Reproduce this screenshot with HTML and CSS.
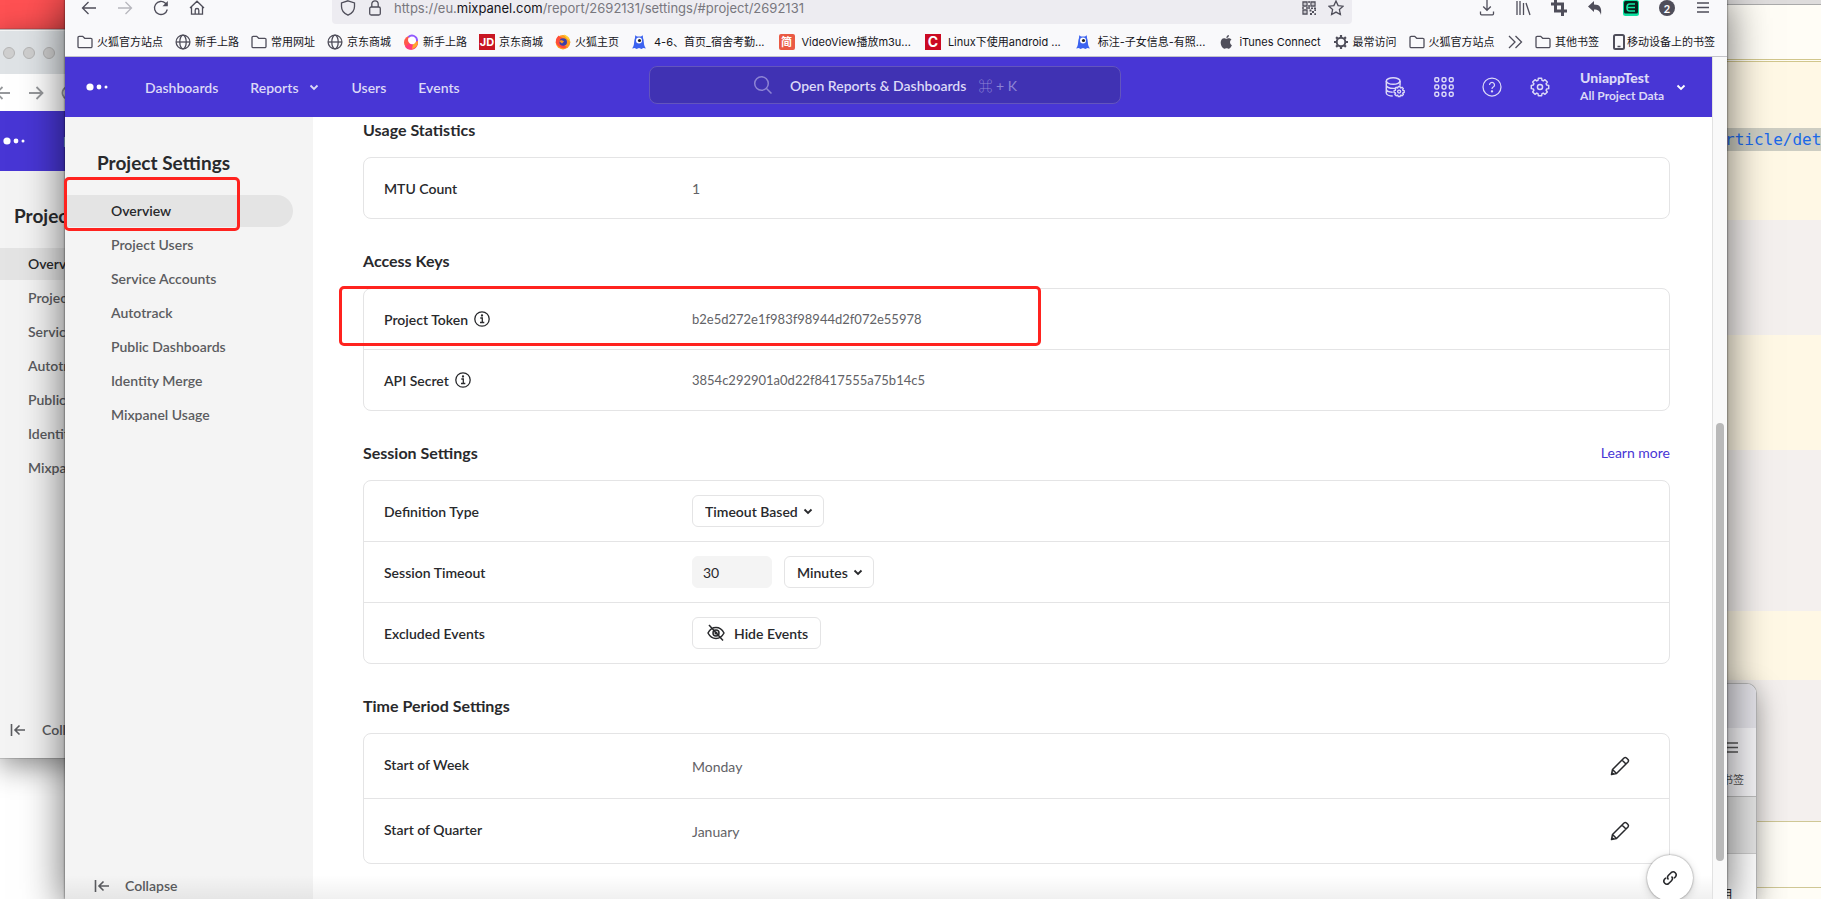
FILE: index.html
```html
<!DOCTYPE html>
<html lang="en">
<head>
<meta charset="utf-8">
<title>Project Settings</title>
<link rel="stylesheet" href="styles.css">
</head>
<body>
<svg class="defs" aria-hidden="true">
  <symbol id="arrow-left" viewBox="0 0 16 16"><path d="M15 8H1.500M7.500 2 1.500 8l6 6"/></symbol>
  <symbol id="arrow-right" viewBox="0 0 16 16"><path d="M1 8h13.500M8.500 2l6 6-6 6"/></symbol>
  <symbol id="reload" viewBox="0 0 16 16"><path d="M14.300 9.500A6.500 6.500 0 1 1 12.500 3.300L14 5"/><path d="M14.800 1v5.300H9.500z" fill="currentColor" stroke="none"/></symbol>
  <symbol id="home" viewBox="0 0 16 16"><path d="M1 8 8 1.200 15 8M2.500 7v7.200h11V7M6.200 14V10.300a1.800 1.800 0 0 1 3.600 0V14"/></symbol>
  <symbol id="folder" viewBox="0 0 16 16"><path d="M1 12.500V3.500a1.200 1.200 0 0 1 1.200-1.200h3.500l2 2h6.100A1.200 1.200 0 0 1 15 5.500v7a1.200 1.200 0 0 1-1.200 1.200H2.200A1.200 1.200 0 0 1 1 12.500z"/></symbol>
  <symbol id="globe" viewBox="0 0 16 16"><circle cx="8" cy="8" r="6.900"/><ellipse cx="8" cy="8" rx="3.200" ry="6.900"/><path d="M1 8h14"/></symbol>
  <symbol id="fox" viewBox="0 0 16 16"><circle cx="8" cy="8.200" r="7.300" fill="#ff9a1f" stroke="none"/><path d="M1 5.500C2 3 3 2.500 3.500 1.500 4.500 3 6 3 8 4L5 9l7 4a7.300 7.300 0 0 1-11-7.500z" fill="#ff4b3a" stroke="none"/><circle cx="8.200" cy="8" r="3.800" fill="#3b3fa8" stroke="none"/><path d="M9 .500c3 1 6 4 6.300 7.500-1-1.500-2-2.500-3-3C11 3 9.500 2.500 9 .500z" fill="#ffd52e" stroke="none"/><path d="M4 7c2-1.500 4-.500 5 .500L7 9.500z" fill="#ff9a1f" stroke="none"/></symbol>
  <symbol id="swirl" viewBox="0 0 16 16"><circle cx="8" cy="8.500" r="7" fill="#ff5a4a" stroke="none"/><path d="M2 12.500A7 7 0 0 0 14.500 11C15 8 14 6 13 5z" fill="#ff3b7c" stroke="none"/><path d="M9 15a7 7 0 0 0 5.800-8L10 10z" fill="#ffa62b" stroke="none"/><circle cx="9.200" cy="6" r="4.200" fill="#fff" stroke="none"/><path d="M5.500 3A5 5 0 0 1 14 7" stroke="#9059ff" stroke-width="1.800"/></symbol>
  <symbol id="monster" viewBox="0 0 16 16"><path d="M4 4 4.200 1.200 6 2.500h4l1.800-1.300L12 4c1 2 .700 6 1.500 8l1.300 2.500-2.500-.500-1.800 1-2.500-1-2.500 1-1.800-1-2.500.500L2.500 12C3.300 10 3 6 4 4z" fill="#3c63f0" stroke="none"/><circle cx="8" cy="6.500" r="3" fill="#fff" stroke="none"/><circle cx="8.500" cy="6.500" r="1.600" fill="#222" stroke="none"/></symbol>
  <symbol id="apple" viewBox="0 0 16 16"><path d="M11 8.200c0-1.700 1.400-2.500 1.500-2.600-.800-1.200-2.100-1.400-2.500-1.400-1.100-.100-2 .600-2.600.600-.500 0-1.400-.600-2.300-.600C3 4.300 1.700 6 1.700 8.600c0 2.800 2 6.200 3.700 6.200.800 0 1.200-.500 2.200-.500 1.100 0 1.400.500 2.200.500 1.500 0 2.800-2.600 3.100-3.700-.100 0-1.900-.800-1.900-2.900zM9.200 3.200c.500-.600.800-1.400.700-2.200-1.500.200-2.700 1.500-2.500 2.900.700 0 1.400-.300 1.800-.700z" fill="currentColor" stroke="none"/></symbol>
  <symbol id="cog" viewBox="0 0 16 16"><circle cx="8" cy="8" r="4.300" stroke-width="2"/><path stroke-width="2.200" d="M8 1v2.500M8 12.500V15M1 8h2.500M12.500 8H15M3.100 3.100l1.700 1.700M11.200 11.200l1.700 1.700M12.900 3.100l-1.700 1.700M4.800 11.200l-1.700 1.700"/></symbol>
  <symbol id="more" viewBox="0 0 16 16"><path d="m2 2 6 6-6 6M8.500 2l6 6-6 6"/></symbol>
  <symbol id="phone" viewBox="0 0 16 16"><rect x="3" y="1" width="10" height="14" rx="1.500" stroke-width="2"/><path d="M6.500 12.500h3" stroke-width="1.500"/></symbol>
  <symbol id="shield" viewBox="0 0 16 16"><path d="M8 .800 14.500 3v3.500c0 4-2.500 7-6.500 8.700C4 13.500 1.500 10.500 1.500 6.500V3z"/></symbol>
  <symbol id="lock" viewBox="0 0 16 16"><rect x="2.700" y="7" width="10.600" height="8" rx="1.500"/><path d="M4.800 7V4a3.200 3.200 0 0 1 6.400 0v3"/></symbol>
  <symbol id="qr" viewBox="0 0 16 16"><path d="M2 2h4v4H2zM10 2h4v4h-4zM2 10h4v4H2z"/><path stroke="none" fill="currentColor" d="M3.500 3.500h1v1h-1zM11.500 3.500h1v1h-1zM3.500 11.500h1v1h-1zM7.300 1h1.500v2H7.300zM7.300 5h1.500v4H7.300zM1 7.300h2v1.500H1zM5 7.300h2v1.500H5zM10 7.500h2V9h-2zM13 7.500h2V9h-2zM8.500 9.500h2v2h-2zM11 11h2v2h-2zM13.300 9.300H15v1.700h-1.700zM9 13h2v2H9zM13.300 13.300H15V15h-1.700z"/></symbol>
  <symbol id="star" viewBox="0 0 16 16"><path d="m8 1 2.100 4.600 5 .600-3.700 3.400 1 5L8 12.100l-4.400 2.500 1-5L.900 6.200l5-.600z"/></symbol>
  <symbol id="download" viewBox="0 0 16 16"><path d="M8 0v10M4.200 6.500 8 10.300l3.800-3.800M1.500 11.500v2.300a1 1 0 0 0 1 1h11a1 1 0 0 0 1-1v-2.300"/></symbol>
  <symbol id="library" viewBox="0 0 16 16"><path d="M2 1v14M5 1v14M8.500 3v12M11 3l4 12"/></symbol>
  <symbol id="crop" viewBox="0 0 16 16"><path stroke-width="3" d="M4.500 0v11H16M0 4h11.500v12"/></symbol>
  <symbol id="undo" viewBox="0 0 16 16"><path d="M1 6.500 7 1v3.500c6 0 8 3 7 10.500-1-4-3-5.500-7-5.500V12z" fill="currentColor" stroke="none"/></symbol>
  <symbol id="evernote" viewBox="0 0 16 16"><rect width="16" height="16" rx="2.500" fill="#0fe0a0" stroke="none"/><rect x="1" y="1" width="14" height="12.500" rx="1.500" fill="#06251d" stroke="none"/><path d="M12 4H6.500Q4 4 4 7.500T6.500 11H12M4 7.500h8" stroke="#12e8a4" stroke-width="1.600"/></symbol>
  <symbol id="menu" viewBox="0 0 16 16"><path d="M2 3h12M2 7.500h12M2 12h12"/></symbol>
  <symbol id="dots" viewBox="0 0 24 8"><g fill="#fff" stroke="none"><circle cx="5" cy="4" r="3.600"/><circle cx="14" cy="4" r="2.400"/><circle cx="21" cy="4" r="1.500"/></g></symbol>
  <symbol id="chevron" viewBox="0 0 12 12"><path d="m2.500 4.500 3.500 3.500 3.500-3.500"/></symbol>
  <symbol id="search" viewBox="0 0 20 20"><circle cx="8.500" cy="8.500" r="6.800"/><path d="m13.500 13.500 5 5"/></symbol>
  <symbol id="gear" viewBox="0 0 24 24"><path stroke-linejoin="round" d="M9.800 4.800 10.200 2.500 13.800 2.500 14.200 4.800 15.540 5.350 17.440 4.010 19.990 6.560 18.650 8.460 19.200 9.800 21.500 10.200 21.500 13.800 19.200 14.200 18.650 15.540 19.990 17.440 17.440 19.990 15.540 18.650 14.200 19.200 13.800 21.500 10.200 21.500 9.800 19.200 8.460 18.650 6.560 19.990 4.010 17.440 5.350 15.540 4.800 14.200 2.500 13.800 2.500 10.200 4.800 9.800 5.350 8.460 4.010 6.560 6.560 4.010 8.460 5.350z"/><circle cx="12" cy="12" r="2.800"/></symbol>
  <symbol id="database" viewBox="0 0 24 24"><ellipse cx="10" cy="5.500" rx="7.500" ry="3.500"/><path d="M2.500 5.500v13c0 2 3.500 3.300 7 3.300M17.500 5.500v5M2.500 10c0 2 3.500 3.500 7.500 3.500 1.200 0 2.300-.100 3.300-.300M2.500 14.300c0 2 3.200 3.400 7 3.400"/><use href="#gear" x="9.500" y="10" width="14" height="14" stroke-width="2.500"/></symbol>
  <symbol id="grid" viewBox="0 0 24 24"><g><rect x="2" y="2" width="4.200" height="4.200" rx="1.200"/><rect x="9.900" y="2" width="4.200" height="4.200" rx="1.200"/><rect x="17.800" y="2" width="4.200" height="4.200" rx="1.200"/><rect x="2" y="9.900" width="4.200" height="4.200" rx="1.200"/><rect x="9.900" y="9.900" width="4.200" height="4.200" rx="1.200"/><rect x="17.800" y="9.900" width="4.200" height="4.200" rx="1.200"/><rect x="2" y="17.800" width="4.200" height="4.200" rx="1.200"/><rect x="9.900" y="17.800" width="4.200" height="4.200" rx="1.200"/><rect x="17.800" y="17.800" width="4.200" height="4.200" rx="1.200"/></g></symbol>
  <symbol id="help" viewBox="0 0 24 24"><circle cx="12" cy="12" r="10.800"/><path d="M9 9.500a3 3 0 1 1 4.500 2.600c-1 .600-1.500 1.100-1.500 2.200"/><circle cx="12" cy="17.200" r=".700" fill="currentColor"/></symbol>
  <symbol id="info" viewBox="0 0 16 16"><circle cx="8" cy="8" r="7.200"/><path d="M6.300 7h2v4.500M6 11.500h4.300"/><circle cx="8" cy="4.500" r=".500" fill="currentColor"/></symbol>
  <symbol id="collapse" viewBox="0 0 16 16"><path d="M1.500 2v12M15 8H5.500M9.500 3.500 5 8l4.500 4.500"/></symbol>
  <symbol id="hide" viewBox="0 0 18 18"><path d="M1 9c2-3.800 4.800-5.500 8-5.500S15 5.200 17 9c-2 3.800-4.800 5.500-8 5.500S3 12.800 1 9z"/><circle cx="9" cy="9" r="3"/><circle cx="9" cy="9" r=".800"/><path d="m2 1 14 15.500"/></symbol>
  <symbol id="pencil" viewBox="0 0 20 20"><path stroke-linejoin="round" d="m1.500 18.500 1-5L14 2a2 2 0 0 1 2.500 0L18 3.500A2 2 0 0 1 18 6L6.500 17.500zM12 4l4 4M2.500 13.500l4 4M1.500 18.500l2-.400-1.600-1.600z"/></symbol>
  <symbol id="link" viewBox="0 0 16 16"><path d="M6.500 9.500a3 3 0 0 1 0-4.200l2.800-2.800a3 3 0 0 1 4.200 4.200L12 8.200M9.500 6.500a3 3 0 0 1 0 4.200l-2.800 2.800a3 3 0 0 1-4.200-4.200L4 7.800"/></symbol>
</svg>

<div class="desktop">
  <div class="editor" aria-hidden="true">
    <div class="ed-bar"></div>
    <div class="ed-white ed-head"></div>
    <div class="ed-yellow ed-first"></div>
    <div class="ed-selected">rticle/deta</div>
    <div class="ed-yellow ed-second"></div>
    <div class="ed-gray ed-third"></div>
    <div class="ed-yellow ed-third"></div>
    <div class="ed-gray ed-fourth"></div>
    <div class="ed-yellow ed-fifth"></div>
    <div class="ed-gray ed-sixth"></div>
    <div class="ed-white ed-line"></div>
    <div class="ed-white ed-line"></div>
  </div>

  <div class="window corner" aria-hidden="true">
    <div class="corner-title"></div>
    <div class="corner-tools"><svg class="ic16"><use href="#menu"/></svg><span>书签</span></div>
    <div class="corner-gray"></div>
    <div class="corner-page">明</div>
  </div>

  <div class="red-strip"></div>
  <div class="window behind" aria-hidden="true">
    <div class="b-title"><i></i><i></i><i></i></div>
    <div class="b-tools"><svg class="ic16"><use href="#arrow-left"/></svg><svg class="ic16"><use href="#arrow-right"/></svg><svg class="ic16"><use href="#reload"/></svg></div>
    <div class="b-head"><svg class="logo"><use href="#dots"/></svg><span>D</span></div>
    <div class="b-side">
      <div class="b-heading">Project</div>
      <div class="b-item b-active">Overv</div>
      <div class="b-item">Project</div>
      <div class="b-item">Service</div>
      <div class="b-item">Autotr</div>
      <div class="b-item">Public</div>
      <div class="b-item">Identit</div>
      <div class="b-item">Mixpan</div>
      <div class="b-collapse"><svg class="ic16"><use href="#collapse"/></svg>Coll</div>
    </div>
  </div>

  <div class="window main">
    <div class="toolbar">
      <div class="tools-left">
        <button aria-label="Back"><svg class="ic16"><use href="#arrow-left"/></svg></button>
        <button aria-label="Forward" class="dim"><svg class="ic16"><use href="#arrow-right"/></svg></button>
        <button aria-label="Reload"><svg class="ic16"><use href="#reload"/></svg></button>
        <button aria-label="Home"><svg class="ic16"><use href="#home"/></svg></button>
      </div>
      <div class="urlbar">
        <svg class="ic16"><use href="#shield"/></svg>
        <svg class="ic16"><use href="#lock"/></svg>
        <div class="url">https://eu.<b>mixpanel.com</b>/report/2692131/settings/#project/2692131</div>
        <svg class="ic16"><use href="#qr"/></svg>
        <svg class="ic16"><use href="#star"/></svg>
      </div>
      <div class="tools-right">
        <button aria-label="Downloads"><svg class="ic16"><use href="#download"/></svg></button>
        <button aria-label="Library"><svg class="ic16"><use href="#library"/></svg></button>
        <button aria-label="Capture"><svg class="ic16"><use href="#crop"/></svg></button>
        <button aria-label="Undo"><svg class="ic16"><use href="#undo"/></svg></button>
        <button aria-label="Clipper"><svg class="ic16"><use href="#evernote"/></svg></button>
        <button class="count">2</button>
        <button aria-label="Menu"><svg class="ic16"><use href="#menu"/></svg></button>
      </div>
    </div>

    <div class="bookmarks">
      <a href="#"><svg class="ic16"><use href="#folder"/></svg>火狐官方站点</a>
      <a href="#"><svg class="ic16"><use href="#globe"/></svg>新手上路</a>
      <a href="#"><svg class="ic16"><use href="#folder"/></svg>常用网址</a>
      <a href="#"><svg class="ic16"><use href="#globe"/></svg>京东商城</a>
      <a href="#"><svg class="ic16"><use href="#swirl"/></svg>新手上路</a>
      <a href="#"><span class="tile jd">JD</span>京东商城</a>
      <a href="#"><svg class="ic16"><use href="#fox"/></svg>火狐主页</a>
      <a href="#" class="page"><svg class="ic16"><use href="#monster"/></svg>4-6、首页_宿舍考勤...</a>
      <a href="#" class="page"><span class="tile jian">简</span>VideoView播放m3u...</a>
      <a href="#" class="page"><span class="tile csdn">C</span>Linux下使用android ...</a>
      <a href="#" class="page"><svg class="ic16"><use href="#monster"/></svg>标注-子女信息-有照...</a>
      <a href="#"><svg class="ic16"><use href="#apple"/></svg>iTunes Connect</a>
      <a href="#"><svg class="ic16"><use href="#cog"/></svg>最常访问</a>
      <a href="#"><svg class="ic16"><use href="#folder"/></svg>火狐官方站点</a>
      <a href="#" aria-label="More bookmarks" class="push"><svg class="ic16"><use href="#more"/></svg></a>
      <a href="#"><svg class="ic16"><use href="#folder"/></svg>其他书签</a>
      <a href="#" class="tight"><svg class="ic16"><use href="#phone"/></svg>移动设备上的书签</a>
    </div>

    <div class="viewport">
      <div class="app">
        <header class="header">
          <nav class="nav">
            <svg class="logo"><use href="#dots"/></svg>
            <a href="#" class="first">Dashboards</a>
            <a href="#" class="reports">Reports <svg class="ic12"><use href="#chevron"/></svg></a>
            <a href="#">Users</a>
            <a href="#">Events</a>
          </nav>
          <button class="search"><svg class="ic20"><use href="#search"/></svg><span>Open Reports &amp; Dashboards</span><kbd>⌘ + K</kbd></button>
          <div class="actions">
            <button aria-label="Data"><svg class="ic22"><use href="#database"/></svg></button>
            <button aria-label="Apps"><svg class="ic22"><use href="#grid"/></svg></button>
            <button aria-label="Help"><svg class="ic20"><use href="#help"/></svg></button>
            <button aria-label="Settings"><svg class="ic22"><use href="#gear"/></svg></button>
            <button class="project"><span><strong>UniappTest</strong><small>All Project Data</small></span><svg class="ic12"><use href="#chevron"/></svg></button>
          </div>
        </header>

        <div class="body">
          <aside class="sidebar">
            <h1>Project Settings</h1>
            <ul>
              <li><a href="#" class="active">Overview</a></li>
              <li><a href="#">Project Users</a></li>
              <li><a href="#">Service Accounts</a></li>
              <li><a href="#">Autotrack</a></li>
              <li><a href="#">Public Dashboards</a></li>
              <li><a href="#">Identity Merge</a></li>
              <li><a href="#">Mixpanel Usage</a></li>
            </ul>
            <button class="collapse"><svg class="ic16"><use href="#collapse"/></svg>Collapse</button>
          </aside>

          <main class="content">
            <section>
              <div class="section-head"><h2>Usage Statistics</h2></div>
              <dl class="card">
                <div class="row"><dt>MTU Count</dt><dd>1</dd></div>
              </dl>
            </section>
            <section>
              <div class="section-head"><h2>Access Keys</h2></div>
              <dl class="card">
                <div class="row"><dt>Project Token <svg class="ic16"><use href="#info"/></svg></dt><dd class="key">b2e5d272e1f983f98944d2f072e55978</dd></div>
                <div class="row"><dt>API Secret <svg class="ic16"><use href="#info"/></svg></dt><dd class="key">3854c292901a0d22f8417555a75b14c5</dd></div>
              </dl>
            </section>
            <section>
              <div class="section-head"><h2>Session Settings</h2><a href="#">Learn more</a></div>
              <div class="card">
                <div class="row"><label for="definition">Definition Type</label>
                  <div class="controls"><span class="picker"><select id="definition"><option>Timeout Based</option></select><svg class="ic12"><use href="#chevron"/></svg></span></div></div>
                <div class="row"><label for="timeout">Session Timeout</label>
                  <div class="controls"><input id="timeout" type="text" value="30"><span class="picker"><select aria-label="Timeout unit"><option>Minutes</option></select><svg class="ic12"><use href="#chevron"/></svg></span></div></div>
                <div class="row"><span class="label">Excluded Events</span>
                  <div class="controls"><button class="outline"><svg class="ic18"><use href="#hide"/></svg>Hide Events</button></div></div>
              </div>
            </section>
            <section>
              <div class="section-head"><h2>Time Period Settings</h2></div>
              <dl class="card tall">
                <div class="row"><dt>Start of Week</dt><dd>Monday</dd><dd class="edit"><button aria-label="Edit start of week"><svg class="ic20"><use href="#pencil"/></svg></button></dd></div>
                <div class="row"><dt>Start of Quarter</dt><dd>January</dd><dd class="edit"><button aria-label="Edit start of quarter"><svg class="ic20"><use href="#pencil"/></svg></button></dd></div>
              </dl>
            </section>
          </main>
        </div>
        <div class="fade"></div>
        <button class="fab" aria-label="Copy link"><svg class="ic16"><use href="#link"/></svg></button>
      </div>
      <div class="scrollbar"><div class="thumb"></div></div>
    </div>
  </div>

  <div class="mark mark-nav"></div>
  <div class="mark mark-token"></div>
</div>
</body>
</html>
```

FILE: styles.css
```css
* { box-sizing: border-box; }
body {
  margin: 0;
  font-family: Lato, "Noto Sans CJK SC", sans-serif;
  font-size: 14px;
  color: #28292c;
}
h1, h2, ul, dl, dd { margin: 0; padding: 0; }
ul { list-style: none; }
a { color: inherit; text-decoration: none; }
button {
  display: flex;
  align-items: center;
  margin: 0;
  padding: 0;
  border: 0;
  background: none;
  color: inherit;
  font: inherit;
}
svg {
  display: block;
  flex: none;
  fill: none;
  stroke: currentColor;
  stroke-width: 1.3;
}
.defs { position: absolute; width: 0; height: 0; }
.ic12 { width: 12px; height: 12px; stroke-width: 1.8; }
.ic16 { width: 16px; height: 16px; }
.ic18 { width: 18px; height: 18px; stroke-width: 1.5; }
.ic20 { width: 20px; height: 20px; stroke-width: 1.5; }
.ic22 { width: 22px; height: 22px; stroke-width: 1.6; }
.logo { width: 24px; height: 8px; }

.desktop {
  position: relative;
  height: 100vh;
  overflow: hidden;
  background: #fff;
}
.window { position: absolute; overflow: hidden; }

/* Editor on the right edge */
.editor {
  position: absolute;
  inset: 0 0 0 auto;
  width: 96px;
}
.ed-bar { height: 5px; background: #dedcdc; border-bottom: 1px solid #aaa; }
.ed-white { background: #fffdf6; }
.ed-yellow { background: #fff8e5; }
.ed-gray { background: #f4f0ee; }
.ed-head { height: 57px; border-bottom: 3px double #d1c68c; }
.ed-first { height: 66px; }
.ed-selected {
  height: 23px;
  line-height: 23px;
  overflow: hidden;
  background: #cdcdc2;
  color: #1a68e8;
  font-family: "DejaVu Sans Mono", monospace;
  font-size: 16px;
}
.ed-second { height: 69px; }
.ed-third { height: 115px; }
.ed-fourth { height: 161px; }
.ed-fifth { height: 69px; }
.ed-sixth { height: 141px; }
.ed-line { height: 66px; border-top: 1px solid #cfc795; }

.corner {
  right: 64px;
  bottom: 0;
  width: 100px;
  height: 216px;
  border: 1px solid #b4b4b4;
  border-bottom: 0;
  border-radius: 0 10px 0 0;
  background: #fff;
  box-shadow: 0 8px 28px rgba(0, 0, 0, .35);
  color: #555;
}
.corner-title { height: 44px; background: #e3e2e8; }
.corner-tools {
  display: flex;
  flex-direction: column;
  align-items: flex-end;
  gap: 16px;
  height: 69px;
  padding: 12px 12px 0;
  border-bottom: 1px solid #bbb;
  background: #f5f4f7;
  font-size: 11px;
  line-height: 16px;
}
.corner-tools svg { margin-right: 4px; }
.corner-gray { height: 57px; border-bottom: 1px solid #ccc; background: #e4e4e4; }
.corner-page { padding: 30px 24px 0; text-align: right; color: #222; font-size: 13px; line-height: 20px; }

/* Browser window on the left edge */
.red-strip {
  position: absolute;
  inset: 0 auto auto 0;
  width: 80px;
  height: 30px;
  background: #ff5153;
}
.behind {
  top: 29px;
  left: 0;
  width: 90px;
  border-top: 1px solid #b9b0b2;
  background: #f4f4f4;
  box-shadow: 0 8px 28px rgba(0, 0, 0, .45), 0 0 1px #444;
}
.b-title {
  display: flex;
  align-items: center;
  gap: 8px;
  height: 44px;
  padding-left: 3px;
  border-top: 1px solid #f4f4f4;
  background: #dfe3e6;
}
.b-title i { width: 12px; height: 12px; border: 1px solid #b5b5b5; border-radius: 50%; background: #cfcfcf; }
.b-tools {
  display: flex;
  align-items: center;
  gap: 17px;
  height: 37px;
  margin-left: -5px;
  background: #fff;
  color: #96989b;
}
.b-tools svg { stroke-width: 1.8; }
.b-head {
  display: flex;
  align-items: center;
  gap: 37px;
  height: 60px;
  padding-left: 2px;
  background: #4836d5;
  color: #dcd9f7;
  font-weight: 600;
}
.b-side { height: 587px; padding-top: 31px; font-weight: 600; color: #5b5c60; white-space: nowrap; }
.b-heading { margin-bottom: 18px; padding-left: 14px; color: #28292c; font-size: 19px; font-weight: 700; line-height: 28px; }
.b-item { height: 32px; margin-bottom: 2px; padding-left: 28px; line-height: 32px; }
.b-active { background: #e4e4e4; color: #28292c; }
.b-collapse { display: flex; align-items: center; gap: 16px; margin-top: 236px; padding-left: 10px; line-height: 20px; }

/* Front browser window */
.main {
  display: flex;
  flex-direction: column;
  inset: -12px 94px 0 65px;
  background: #fff;
  box-shadow: 0 10px 40px rgba(0, 0, 0, .6), 0 0 2px rgba(0, 0, 0, .7);
}
.toolbar {
  display: flex;
  align-items: center;
  flex: none;
  height: 40px;
  padding: 0 16px;
  background: #f9f9fb;
  color: #4f4e5a;
}
.tools-left { display: flex; gap: 20px; width: 251px; }
.dim { color: #b7b7bd; }
.urlbar {
  display: flex;
  align-items: center;
  gap: 11px;
  flex: 1;
  height: 32px;
  padding: 0 8px;
  border-radius: 4px;
  background: #edecf1;
}
.url {
  flex: 1;
  color: #78777e;
  font-family: Inter, sans-serif;
  font-size: 13px;
}
.url b { color: #15141a; font-weight: 400; }
.tools-right { display: flex; justify-content: flex-end; gap: 20px; width: 359px; }
.count {
  justify-content: center;
  width: 16px;
  height: 16px;
  border-radius: 50%;
  background: #4f4e5a;
  color: #fff;
  font-size: 11px;
  font-weight: 700;
}
.bookmarks {
  display: flex;
  align-items: center;
  gap: 12px;
  flex: none;
  height: 29px;
  padding: 0 12px;
  border-bottom: 1px solid #c3c3c9;
  background: #f9f9fb;
  color: #15141a;
  font-family: Inter, "Noto Sans CJK SC", sans-serif;
  font-size: 11px;
  line-height: 16px;
  white-space: nowrap;
}
.bookmarks a { display: flex; align-items: center; gap: 4px; }
.bookmarks svg { color: #4f4e5a; }
.bookmarks .page { gap: 7px; margin-right: 2px; }
.bookmarks .push { margin-left: auto; }
.bookmarks .tight { gap: 0; }
.tile { width: 16px; height: 16px; color: #fff; font-weight: 700; text-align: center; }
.jd { background: #c81623; }
.jian { border-radius: 2px; background: #ea5a44; }
.csdn { background: #cb0a23; font-size: 14px; }

.viewport { display: flex; flex: 1; min-height: 0; }
.app { position: relative; display: flex; flex-direction: column; flex: 1; min-width: 0; }
.header {
  display: grid;
  grid-template-columns: 1fr 472px 1fr;
  align-items: center;
  flex: none;
  height: 60px;
  padding: 0 27px 0 20px;
  background: #4836d5;
  color: #dcd9f7;
  font-weight: 600;
}
.nav { display: flex; align-items: center; gap: 32px; }
.nav .first { margin-left: 4px; }
.reports { display: flex; align-items: center; gap: 9px; }
.search {
  justify-content: center;
  height: 38px;
  margin-bottom: 4px;
  border: 1px solid #6355bd;
  border-radius: 8px;
  background: #4032b3;
}
.search svg { margin-right: 17px; color: #8d84d4; }
.search kbd { margin-left: 12px; color: #8d84d4; font: inherit; font-weight: 400; }
.actions { display: flex; align-items: center; justify-content: flex-end; gap: 27px; margin-right: -2px; }
.project { gap: 11px; margin-left: 2px; text-align: left; font-weight: 700; }
.project strong, .project small { display: block; line-height: 18px; }
.project small { font-size: 12px; }
.project svg { color: #fff; }

.body { display: flex; flex: 1; min-height: 0; }
.sidebar {
  display: flex;
  flex-direction: column;
  flex: none;
  width: 248px;
  padding: 32px 20px 3px 0;
  background: #f4f4f4;
  color: #5b5c60;
  font-weight: 600;
}
.sidebar h1 { margin-bottom: 18px; padding-left: 32px; color: #28292c; font-size: 19px; line-height: 28px; }
.sidebar ul { display: grid; gap: 2px; }
.sidebar a { display: block; padding-left: 46px; border-radius: 0 16px 16px 0; line-height: 32px; }
.sidebar .active { background: #e4e4e4; color: #28292c; }
.collapse { gap: 15px; margin-top: auto; padding-left: 29px; line-height: 20px; }
.collapse svg, .b-collapse svg { stroke-width: 1.6; }

.content {
  display: flex;
  flex-direction: column;
  gap: 30px;
  flex: 1;
  padding: 1px 42px 0 50px;
}
.section-head {
  display: flex;
  justify-content: space-between;
  margin-bottom: 15px;
  line-height: 24px;
}
.section-head h2 { font-size: 16px; }
.section-head a { color: #4836d5; }
.card { border: 1px solid #e4e4e5; border-radius: 8px; }
.row { display: flex; align-items: center; height: 60px; padding: 0 39px 0 20px; }
.row + .row { height: 61px; border-top: 1px solid #e4e4e5; }
.tall .row { height: 64px; }
.tall .row + .row { height: 65px; }
.row > dt, .row > label, .row > .label {
  display: flex;
  align-items: center;
  gap: 6px;
  flex: none;
  width: 308px;
  font-weight: 600;
}
.tall dt { padding-bottom: 4px; }
.row dd { color: #626266; }
.row .key { font-size: 13px; }
.row .edit { margin-left: auto; color: #28292c; }
.controls { display: flex; gap: 12px; }
.picker { display: grid; align-items: center; }
.picker select, .picker svg { grid-area: 1 / 1; }
.picker svg { justify-self: end; margin-right: 10px; pointer-events: none; }
select, input, .outline {
  height: 32px;
  border: 1px solid #e4e4e5;
  border-radius: 6px;
  background: #fff;
  color: #28292c;
  font: inherit;
  font-weight: 600;
}
select { appearance: none; padding: 0 25px 0 12px; }
input { width: 80px; padding: 0 10px; border-color: #f4f4f4; background: #f4f4f4; font-weight: 400; }
.outline { gap: 9px; padding: 0 12px 0 14px; }

.fade {
  position: absolute;
  inset: auto 0 0 0;
  height: 24px;
  background: linear-gradient(rgba(0, 0, 0, 0), rgba(0, 0, 0, .06));
}
.fab {
  position: absolute;
  right: 19px;
  bottom: -2px;
  justify-content: center;
  width: 46px;
  height: 46px;
  border-radius: 50%;
  background: #fff;
  box-shadow: 0 0 2px rgba(0, 0, 0, .5), 0 2px 10px rgba(0, 0, 0, .15);
}
.fab svg { stroke-width: 1.6; }
.scrollbar {
  flex: none;
  width: 15px;
  padding: 366px 3px 0;
  border-left: 1px solid #e2e2e2;
  background: #f9f9f9;
}
.thumb { width: 8px; height: 438px; border-radius: 4px; background: #b9b9b9; }

/* Red highlight frames */
.mark { position: absolute; border: 3px solid #ff231f; border-radius: 5px; pointer-events: none; }
.mark-nav { top: 177px; left: 64px; width: 176px; height: 54px; }
.mark-token { top: 286px; left: 339px; width: 702px; height: 60px; }
```
